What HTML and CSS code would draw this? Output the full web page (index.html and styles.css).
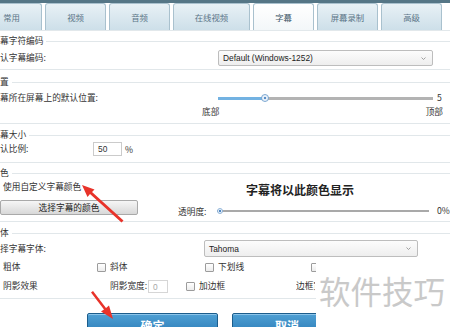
FILE: index.html
```html
<!DOCTYPE html>
<html lang="zh-CN">
  <head>
    <meta charset="UTF-8" />
    <title>字幕设置</title>
    <link rel="stylesheet" href="styles.css">
  </head>
  <body>
    <div class="topbar"></div>
    <ul class="tabs">
      <li class="tab">常用</li>
      <li class="tab">视频</li>
      <li class="tab">音频</li>
      <li class="tab wide">在线视频</li>
      <li class="tab active">字幕</li>
      <li class="tab">屏幕录制</li>
      <li class="tab">高级</li>
    </ul>

    <div class="panel">
      <div class="group group-encoding">
        <div class="group-title">幕字符编码</div>
        <div class="row row-select">
          <span class="label label-wide">认字幕编码:</span>
          <div class="select select-encoding">
            <span>Default (Windows-1252)</span>
            <svg class="caret" width="5" height="3" viewBox="0 0 5 3"><path d="M0.5 0.5 L2.5 2.5 L4.5 0.5" fill="none" stroke="#8a8a8a" stroke-width="0.8"/></svg>
          </div>
        </div>
      </div>

      <div class="group group-position">
        <div class="group-title">置</div>
        <div class="row row-slider">
          <span class="label label-wide">幕所在屏幕上的默认位置:</span>
          <div class="slider">
            <div class="track track-fill"></div>
            <div class="track track-rest"></div>
            <div class="thumb"></div>
          </div>
          <span class="slider-value">5</span>
        </div>
        <div class="row row-ends">
          <span>底部</span>
          <span>顶部</span>
        </div>
      </div>

      <div class="group group-size">
        <div class="group-title">幕大小</div>
        <div class="row row-input">
          <span class="label label-scale">认比例:</span>
          <div class="input">50</div>
          <span class="unit">%</span>
        </div>
      </div>

      <div class="group group-color">
        <div class="group-title">色</div>
        <div class="row row-custom">
          <span class="label label-custom">使用自定义字幕颜色</span>
          <span class="preview-text">字幕将以此颜色显示</span>
        </div>
        <div class="row row-button">
          <button class="btn-gray">选择字幕的颜色</button>
          <span class="label label-alpha">透明度:</span>
          <div class="slider slider-alpha">
            <div class="track track-gray"></div>
            <div class="thumb thumb-small"></div>
          </div>
          <span class="alpha-value">0%</span>
        </div>
      </div>

      <div class="group group-font">
        <div class="group-title">体</div>
        <div class="row row-font">
          <span class="label label-font">择字幕字体:</span>
          <div class="select select-font">
            <span>Tahoma</span>
            <svg class="caret" width="5" height="3" viewBox="0 0 5 3"><path d="M0.5 0.5 L2.5 2.5 L4.5 0.5" fill="none" stroke="#8a8a8a" stroke-width="0.8"/></svg>
          </div>
        </div>
        <div class="row row-checks">
          <span class="check check-bold">粗体</span>
          <span class="check check-italic"><i class="box"></i>斜体</span>
          <span class="check check-under"><i class="box"></i>下划线</span>
          <span class="check"><i class="box"></i></span>
        </div>
        <div class="row row-shadow">
          <span class="check check-shadow">阴影效果</span>
          <span class="label label-shadow">阴影宽度:</span>
          <div class="input input-disabled">0</div>
          <span class="check check-border"><i class="box"></i>加边框</span>
          <span class="label label-clip">边框宽</span>
        </div>
      </div>

      <div class="actions">
        <button class="btn-blue btn-ok">确定</button>
        <button class="btn-blue btn-cancel">取消</button>
      </div>
    </div>

    <div class="watermark">软件技巧</div>

    <svg class="arrows" width="450" height="327" viewBox="0 0 450 327">
      <!-- arrow pointing at the custom colour checkbox -->
      <polygon points="82,185 94.5,189.5 92,192 123.5,220.5 121.5,222.5 90,194 87.5,197" fill="#e8332a"/>
      <!-- arrow pointing at the ok button -->
      <polygon points="113,319 101,311.5 104,309.5 91,292.5 93,291 106,308 109,305.5" fill="#e8332a"/>
    </svg>
  </body>
</html>
```

FILE: styles.css
```css
html,
body {
  margin: 0;
  padding: 0;
}

body {
  position: relative;
  width: 450px;
  height: 327px;
  overflow: hidden;
  background: #fff;
  color: #333;
  font-family: "Noto Sans CJK SC", sans-serif;
  font-size: 8.7px;
}

.topbar {
  height: 3px;
  background: #557686;
}

/* tab strip */
.tabs {
  display: flex;
  gap: 3px;
  height: 27px;
  margin: 0 0 0 -19px;
  padding: 0;
  list-style: none;
  border-bottom: 1px solid #e2e8eb;
}

.tab {
  display: flex;
  align-items: center;
  justify-content: center;
  width: 61px;
  height: 27px;
  box-sizing: border-box;
  border: 1px solid #a9c1ce;
  border-bottom: none;
  border-radius: 3px 3px 0 0;
  background: linear-gradient(#e8f1f6, #cddfe9);
  color: #5b7587;
  font-size: 8.4px;
}

.tab.wide {
  width: 77px;
}

.tab.active {
  background: linear-gradient(#ffffff, #f3f7f9);
  color: #3f5868;
}

/* groups */
.panel {
  padding-top: 5px;
}

.group {
  border-bottom: 1px solid #e1e7ea;
}

.group-title {
  display: flex;
  align-items: center;
  gap: 3px;
  height: 10px;
  line-height: 10px;
  color: #333;
}

.group-title::after {
  content: "";
  flex: 1;
  border-top: 1px solid #e1e7ea;
}

.row {
  display: flex;
  align-items: center;
}

.label {
  flex: none;
  line-height: 10px;
}

.label-wide {
  width: 218px;
}

.group-encoding {
  padding-bottom: 3px;
}

.row-select {
  height: 16px;
  margin-top: 4px;
}

.select {
  display: flex;
  align-items: center;
  justify-content: space-between;
  box-sizing: border-box;
  height: 100%;
  padding: 0 6px 0 4px;
  border: 1px solid #bdbdbd;
  border-radius: 2px;
  background: linear-gradient(#fcfcfc, #eeeeee);
  color: #222;
  font-family: "Liberation Sans", Arial, sans-serif;
  font-size: 8.4px;
}

.select-encoding {
  width: 215px;
}

.group-position {
  margin-top: 7px;
  padding-bottom: 6px;
}

.row-slider {
  height: 12px;
  margin-top: 5px;
}

.slider {
  position: relative;
  display: flex;
  align-items: center;
  width: 215px;
  height: 100%;
}

.track {
  height: 3px;
}

.track-fill {
  width: 46px;
  background: #73b2e2;
}

.track-rest {
  flex: 1;
  background: #b3b3b3;
}

.thumb {
  position: absolute;
  left: 43px;
  top: 2px;
  width: 6px;
  height: 6px;
  border: 1px solid #7da8d2;
  border-radius: 50%;
  background: radial-gradient(#5a8fc8 0 1.2px, #eaf2fa 1.6px);
}

.slider-value {
  margin-left: 4px;
  line-height: 10px;
}

.row-ends {
  justify-content: space-between;
  width: 241px;
  height: 10px;
  margin: 3px 0 0 202px;
  line-height: 10px;
}

.group-size {
  margin-top: 6px;
  padding-bottom: 6px;
}

.row-input {
  height: 14px;
  margin-top: 2px;
}

.label-scale {
  width: 93px;
}

.input {
  box-sizing: border-box;
  width: 29px;
  height: 14px;
  padding-left: 4px;
  border: 1px solid #cbcbcb;
  background: #fff;
  line-height: 12px;
  font-family: "Liberation Sans", Arial, sans-serif;
  font-size: 8.4px;
}

.unit {
  margin-left: 3px;
}

.group-color {
  margin-top: 5px;
  padding-bottom: 6px;
}

.row-custom {
  align-items: flex-start;
  height: 14px;
  margin-top: 3px;
}

.label-custom {
  width: 243px;
  margin: 1px 0 0 3px;
}

.preview-text {
  margin-top: 2px;
  font-size: 12px;
  font-weight: bold;
  line-height: 14px;
  color: #222;
}

.row-button {
  align-items: flex-start;
  height: 15px;
  margin-top: 5px;
}

.btn-gray {
  width: 138px;
  height: 15px;
  padding: 0;
  border: 1px solid #a9a9a9;
  border-radius: 2px;
  background: linear-gradient(#f6f6f6, #d8d8d8);
  color: #222;
  font-family: inherit;
  font-size: 8.7px;
  line-height: 13px;
}

.label-alpha {
  margin: 7px 0 0 40px;
  width: 39px;
}

.slider-alpha {
  width: 212px;
  height: 6px;
  margin-top: 8px;
}

.track-gray {
  flex: 1;
  height: 2px;
  background: #a9a9a9;
}

.thumb-small {
  left: 0;
  top: 0;
  width: 4px;
  height: 4px;
  border-color: #8fb4d9;
  background: radial-gradient(#4f88c4 0 1px, #eaf2fa 1.4px);
}

.alpha-value {
  margin: 6px 0 0 8px;
  line-height: 10px;
}

.group-font {
  margin-top: 6px;
  padding-bottom: 5px;
}

.row-font {
  height: 17px;
  margin-top: 2px;
}

.label-font {
  width: 204px;
}

.select-font {
  width: 214px;
  padding-left: 4px;
}

.row-checks {
  height: 10px;
  margin-top: 5px;
  line-height: 10px;
}

.check {
  display: flex;
  align-items: center;
  gap: 4px;
  flex: none;
}

.box {
  display: block;
  width: 7px;
  height: 7px;
  border: 1px solid #9c9c9c;
  border-radius: 1px;
  background: linear-gradient(#ffffff, #ececec);
}

.check-bold {
  width: 94px;
  padding-left: 3px;
}

.check-italic {
  width: 108px;
}

.check-under {
  width: 106px;
}

.row-shadow {
  height: 14px;
  margin-top: 7px;
  line-height: 10px;
}

.check-shadow {
  width: 107px;
  padding-left: 3px;
}

.label-shadow {
  width: 38px;
}

.input-disabled {
  width: 20px;
  height: 13px;
  border-color: #d6d6d6;
  color: #a8a8a8;
}

.check-border {
  width: 110px;
  margin-left: 18px;
}

.label-clip {
  width: 19px;
  overflow: hidden;
  white-space: nowrap;
}

/* dialog buttons */
.actions {
  display: flex;
  gap: 14px;
  margin: 14px 0 0 87px;
}

.btn-blue {
  height: 26px;
  padding: 0 0 2px;
  border: 1px solid #1c5d8c;
  border-radius: 2px;
  background: linear-gradient(#4fa0d4, #2676b2);
  box-shadow: inset 0 1px 0 #8cc5ea;
  color: #fff;
  font-family: inherit;
  font-size: 12px;
  font-weight: bold;
}

.btn-ok {
  width: 131px;
}

.btn-cancel {
  width: 110px;
}

/* overlays */
.watermark {
  position: absolute;
  left: 316px;
  top: 259px;
  width: 134px;
  height: 68px;
  padding: 15px 0 0 3px;
  box-sizing: border-box;
  background: #fff;
  color: #c9c9c9;
  font-size: 31.5px;
  line-height: 32px;
}

.arrows {
  position: absolute;
  left: 0;
  top: 0;
  pointer-events: none;
}
```
